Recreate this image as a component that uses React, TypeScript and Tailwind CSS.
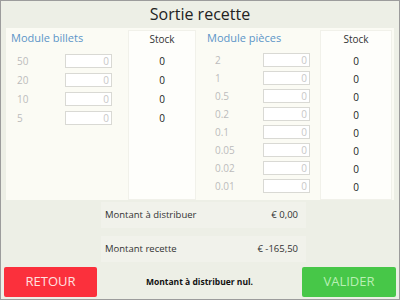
import React from "react";

const billets = ["50", "20", "10", "5"];
const pieces = ["2", "1", "0.5", "0.2", "0.1", "0.05", "0.02", "0.01"];

const font = { fontFamily: '"Open Sans", "Noto Sans", sans-serif' };

// one input row: label + greyed qty box
const QtyRow = ({ label, rowClass }: { label: string; rowClass: string }) => (
  <div className={`flex items-center ${rowClass}`}>
    <span className="w-[48px] text-[10px] text-[#bcbcbc] leading-none">{label}</span>
    <div className="w-[47px] h-[14px] bg-white border border-[#d9d9d4] text-right pr-[2px] text-[10px] leading-[12px] text-[#c8c8c8]">
      0
    </div>
  </div>
);

const StockCol = ({ count, rowClass, width }: { count: number; rowClass: string; width: string }) => (
  <div className={`${width} mt-[2px] bg-[#fefefb] border border-[#f1f1ea] flex flex-col items-center`}>
    <div className="h-[21px] pt-[1px] text-[10px] leading-[14px] text-[#333]">Stock</div>
    {Array.from({ length: count }).map((_, i) => (
      <div key={i} className={`flex items-center text-[10px] text-[#222] ${rowClass}`}>
        0
      </div>
    ))}
  </div>
);

export default function App() {
  return (
    <div
      className="w-[400px] h-[300px] border border-[#9c9c9c] bg-[#edefe6] flex flex-col overflow-hidden"
      style={font}
    >
      {/* Title */}
      <div className="h-[27px] text-center text-[16px] leading-[27px] text-[#222]">Sortie recette</div>

      {/* Modules panel */}
      <div className="mx-[5px] h-[172px] bg-[#fbfbf4] flex">
        {/* Billets */}
        <div className="w-[194px] flex pr-[4px]">
          <div className="flex-1 flex flex-col">
            <div className="h-[23px] pl-[5px] pt-[2px] text-[11px] leading-[16px] text-[#5b95c8]">Module billets</div>
            <div className="pl-[11px] flex flex-col">
              {billets.map((b) => (
                <QtyRow key={b} label={b} rowClass="h-[19px]" />
              ))}
            </div>
          </div>
          <StockCol count={billets.length} rowClass="h-[19px]" width="w-[68px]" />
        </div>

        {/* Pièces */}
        <div className="w-[194px] flex pr-[2px]">
          <div className="flex-1 flex flex-col">
            <div className="h-[23px] pl-[7px] pt-[2px] text-[11px] leading-[16px] text-[#5b95c8]">Module pièces</div>
            <div className="pl-[15px] flex flex-col">
              {pieces.map((p) => (
                <QtyRow key={p} label={p} rowClass="h-[18px]" />
              ))}
            </div>
          </div>
          <StockCol count={pieces.length} rowClass="h-[18px]" width="w-[72px]" />
        </div>
      </div>

      {/* Totals */}
      <div className="flex flex-col pl-[100px] pt-[2px] gap-[8px]">
        <div className="w-[205px] h-[26px] bg-[#f1f2eb] flex items-center justify-between pl-[4px] pr-[8px] text-[9.5px] text-[#333]">
          <span>Montant à distribuer</span>
          <span>€ 0,00</span>
        </div>
        <div className="w-[205px] h-[26px] bg-[#f1f2eb] flex items-center justify-between pl-[4px] pr-[8px] text-[9.5px] text-[#333]">
          <span>Montant recette</span>
          <span>€ -165,50</span>
        </div>
      </div>

      {/* Footer */}
      <div className="mt-[5px] flex items-center px-[3px]">
        <button className="w-[93px] h-[30px] rounded-[2px] bg-[#fb303c] text-[13px] text-[#ffe0e0]">RETOUR</button>
        <div className="flex-1 text-center text-[8.5px] font-bold text-[#111]">Montant à distribuer nul.</div>
        <button className="w-[94px] h-[30px] rounded-[2px] bg-[#47c748] text-[13px] text-[#b9efb4]">VALIDER</button>
      </div>
    </div>
  );
}
